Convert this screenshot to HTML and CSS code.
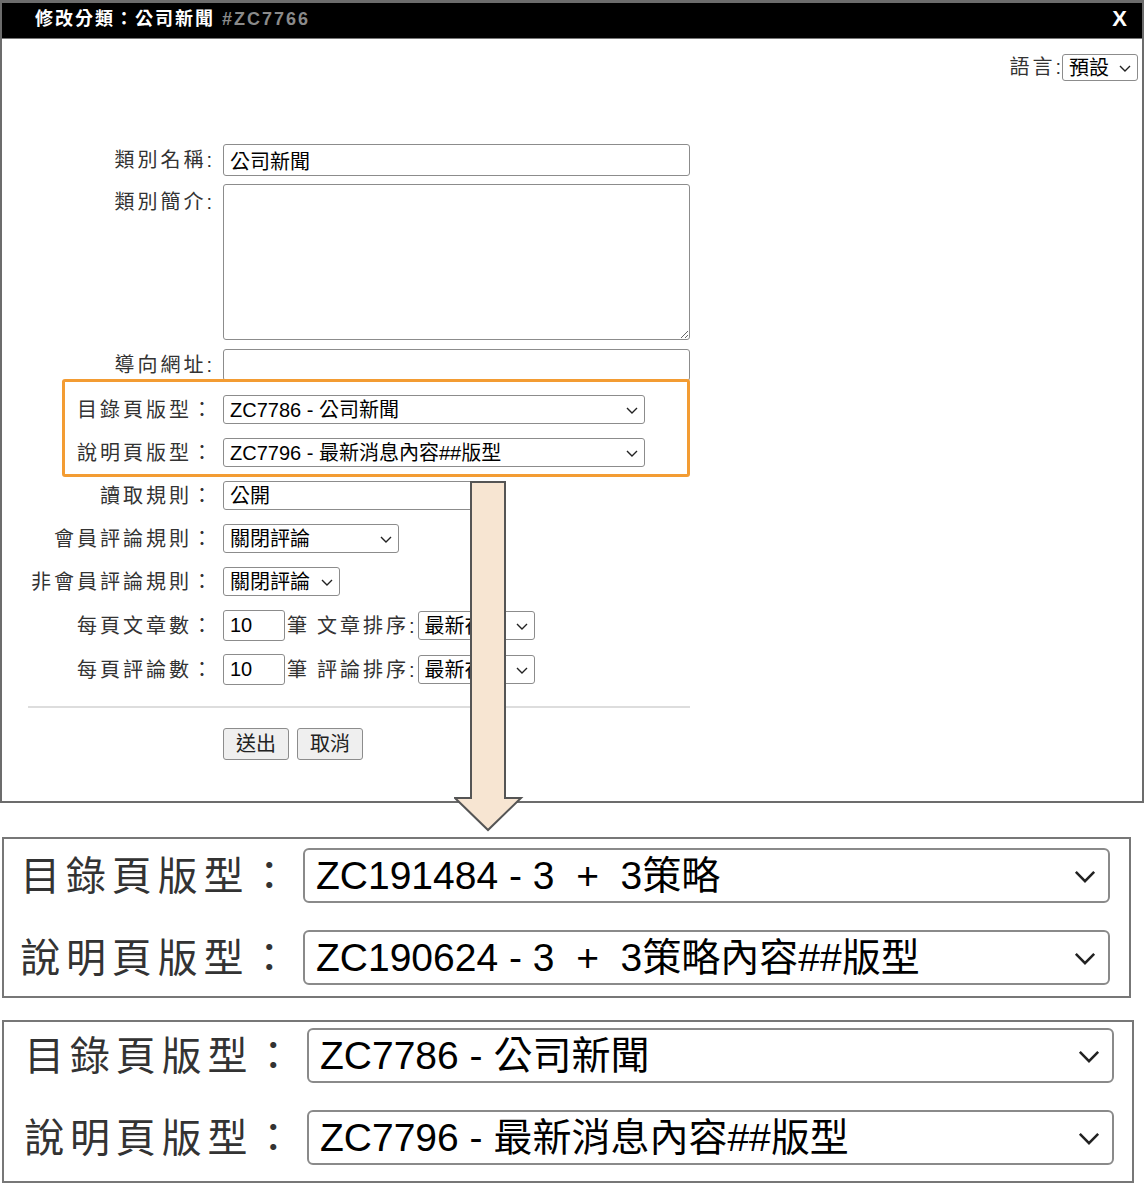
FILE: index.html
```html
<!DOCTYPE html>
<html lang="zh-Hant">
<head>
    <meta charset="UTF-8">
    <meta name="viewport" content="width=device-width, initial-scale=1.0">
    <title>修改分類</title>
    <link rel="stylesheet" href="styles.css">
</head>
<body>
    <div class="dialog">
        <div class="dialog-head">
            <span class="title">修改分類：公司新聞 <span class="code">#ZC7766</span></span>
            <span class="close">X</span>
        </div>
        <div class="lang">
            <span class="lang-label">語言:</span>
            <span class="sel">
                <select class="lang-select"><option>預設</option></select>
                <svg class="chev" viewBox="0 0 12 7"><path d="M1 1l5 5 5-5"/></svg>
            </span>
        </div>

        <form class="cat-form">
            <div class="row row-text">
                <label>類別名稱:</label>
                <input class="field" type="text" value="公司新聞">
            </div>
            <div class="row row-text row-top">
                <label>類別簡介:</label>
                <textarea class="field area"></textarea>
            </div>
            <div class="row">
                <label>導向網址:</label>
                <input class="field" type="text" value="">
            </div>
            <div class="row">
                <label>目錄頁版型：</label>
                <span class="sel">
                    <select class="tpl"><option>ZC7786 - 公司新聞</option></select>
                    <svg class="chev" viewBox="0 0 12 7"><path d="M1 1l5 5 5-5"/></svg>
                </span>
            </div>
            <div class="row">
                <label>說明頁版型：</label>
                <span class="sel">
                    <select class="tpl"><option>ZC7796 - 最新消息內容##版型</option></select>
                    <svg class="chev" viewBox="0 0 12 7"><path d="M1 1l5 5 5-5"/></svg>
                </span>
            </div>
            <div class="row">
                <label>讀取規則：</label>
                <span class="sel">
                    <select class="read"><option>公開</option></select>
                    <svg class="chev" viewBox="0 0 12 7"><path d="M1 1l5 5 5-5"/></svg>
                </span>
            </div>
            <div class="row">
                <label>會員評論規則：</label>
                <span class="sel">
                    <select class="member"><option>關閉評論</option></select>
                    <svg class="chev" viewBox="0 0 12 7"><path d="M1 1l5 5 5-5"/></svg>
                </span>
            </div>
            <div class="row">
                <label>非會員評論規則：</label>
                <span class="sel">
                    <select class="guest"><option>關閉評論</option></select>
                    <svg class="chev" viewBox="0 0 12 7"><path d="M1 1l5 5 5-5"/></svg>
                </span>
            </div>
            <div class="row row-num">
                <label>每頁文章數：</label>
                <input class="num" type="text" value="10">
                <span class="unit">筆</span>
                <span class="sort-label">文章排序:</span>
                <span class="sel">
                    <select class="sort"><option>最新在前</option></select>
                    <svg class="chev" viewBox="0 0 12 7"><path d="M1 1l5 5 5-5"/></svg>
                </span>
            </div>
            <div class="row row-num">
                <label>每頁評論數：</label>
                <input class="num" type="text" value="10">
                <span class="unit">筆</span>
                <span class="sort-label">評論排序:</span>
                <span class="sel">
                    <select class="sort"><option>最新在前</option></select>
                    <svg class="chev" viewBox="0 0 12 7"><path d="M1 1l5 5 5-5"/></svg>
                </span>
            </div>

            <hr class="sep">

            <div class="buttons">
                <button type="button" class="btn">送出</button>
                <button type="button" class="btn">取消</button>
            </div>

            <!-- highlight around the two template selects -->
            <div class="highlight"></div>
        </form>
    </div>

    <svg class="arrow" width="70" height="354" viewBox="0 0 70 354">
        <path d="M17 2 H51 V318 H67 L34 350 L1 318 H17 Z"/>
    </svg>

    <div class="zoom zoom-new">
        <div class="zrow">
            <label>目錄頁版型：</label>
            <span class="sel">
                <select class="big"><option>ZC191484 - 3&nbsp;&nbsp;+&nbsp;&nbsp;3策略</option></select>
                <svg class="chev big-chev" viewBox="0 0 12 7"><path d="M1 1l5 5 5-5"/></svg>
            </span>
        </div>
        <div class="zrow">
            <label>說明頁版型：</label>
            <span class="sel">
                <select class="big"><option>ZC190624 - 3&nbsp;&nbsp;+&nbsp;&nbsp;3策略內容##版型</option></select>
                <svg class="chev big-chev" viewBox="0 0 12 7"><path d="M1 1l5 5 5-5"/></svg>
            </span>
        </div>
    </div>

    <div class="zoom zoom-old">
        <div class="zrow">
            <label>目錄頁版型：</label>
            <span class="sel">
                <select class="big"><option>ZC7786 - 公司新聞</option></select>
                <svg class="chev big-chev" viewBox="0 0 12 7"><path d="M1 1l5 5 5-5"/></svg>
            </span>
        </div>
        <div class="zrow">
            <label>說明頁版型：</label>
            <span class="sel">
                <select class="big"><option>ZC7796 - 最新消息內容##版型</option></select>
                <svg class="chev big-chev" viewBox="0 0 12 7"><path d="M1 1l5 5 5-5"/></svg>
            </span>
        </div>
    </div>
</body>
</html>
```

FILE: styles.css
```css
body {
    margin: 0;
    position: relative;
    font-family: "Liberation Sans", "Noto Sans CJK TC", sans-serif;
    color: #333;
    background: #fff;
}
.dialog {
    box-sizing: border-box;
    height: 803px;
    border: 2px solid #6c6c6c;
    border-top-width: 3px;
}
.dialog-head {
    box-sizing: border-box;
    height: 36px;
    background: #000;
    border-bottom: 1px solid #777;
    display: flex;
    align-items: center;
    justify-content: space-between;
    padding: 0 15px 3px 33px;
    line-height: 1;
}
.title {
    color: #fff;
    font-weight: bold;
    font-size: 18px;
    letter-spacing: 2px;
}
.code {
    color: #8a8a8a;
}
.close {
    color: #fff;
    font-weight: bold;
    font-size: 22px;
}
.lang {
    display: flex;
    justify-content: flex-end;
    align-items: center;
    height: 27px;
    margin-top: 15px;
    padding-right: 4px;
    font-size: 20px;
    line-height: 27px;
}
.lang-label {
    letter-spacing: 3px;
    margin-right: -2px;
}

/* select with drawn chevron */
.sel {
    position: relative;
    display: inline-flex;
}
.sel select {
    appearance: none;
    -webkit-appearance: none;
    box-sizing: border-box;
    height: 29px;
    margin: 0;
    padding: 0 24px 0 6px;
    font: inherit;
    font-size: 20px;
    color: #000;
    background: #fff;
    border: 1px solid #8c8c8c;
    border-radius: 3px;
}
.chev {
    position: absolute;
    right: 7px;
    top: 50%;
    width: 12px;
    height: 7px;
    margin-top: -3px;
    fill: none;
    stroke: #222;
    stroke-width: 1.4;
}
.lang-select {
    width: 76px;
    height: 27px !important;
}

.cat-form {
    position: relative;
    width: 688px;
    margin-top: 63px;
}
.row {
    display: flex;
    align-items: center;
    margin-bottom: 14px;
    font-size: 20px;
}
.row-text {
    margin-bottom: 8px;
}
.row-top {
    align-items: flex-start;
    margin-bottom: 9px;
}
.row label {
    flex: none;
    width: 213px;
    margin-right: 8px;
    text-align: right;
    letter-spacing: 3px;
    line-height: 24px;
}
.row-top label {
    line-height: 36px;
}
.field {
    box-sizing: border-box;
    width: 467px;
    height: 32px;
    margin: 0;
    padding: 0 6px;
    font: inherit;
    font-size: 20px;
    color: #000;
    border: 1px solid #8c8c8c;
    border-radius: 3px;
}
.area {
    height: 156px;
    resize: both;
}
.tpl {
    width: 422px;
}
.read {
    width: 283px;
}
.member {
    width: 176px;
}
.guest {
    width: 117px;
}
.row-num {
    margin-bottom: 13px;
}
.num {
    box-sizing: border-box;
    width: 62px;
    height: 31px;
    margin: 0;
    padding: 0 6px;
    font: inherit;
    font-size: 20px;
    color: #000;
    border: 1px solid #8c8c8c;
    border-radius: 3px;
}
.unit {
    margin-left: 2px;
    line-height: 24px;
}
.sort-label {
    margin-left: 10px;
    letter-spacing: 3px;
    line-height: 24px;
}
.sort {
    width: 117px;
}
.sep {
    border: none;
    border-top: 2px solid #ddd;
    width: 662px;
    margin: 21px 0 20px 26px;
}
.buttons {
    display: flex;
    gap: 8px;
    padding-left: 221px;
}
.btn {
    height: 32px;
    padding: 0 12px;
    font: inherit;
    font-size: 20px;
    line-height: 1;
    color: #222;
    background: #efefef;
    border: 1px solid #8c8c8c;
    border-radius: 3px;
}
.highlight {
    position: absolute;
    left: 60px;
    top: 235px;
    box-sizing: border-box;
    width: 628px;
    height: 98px;
    border: 3px solid #f39c33;
    border-radius: 3px;
}

.arrow {
    position: absolute;
    left: 454px;
    top: 480px;
}
.arrow path {
    fill: #f7e5d2;
    stroke: #555;
    stroke-width: 2;
}

.zoom {
    box-sizing: border-box;
    margin-left: 2px;
    border: 2px solid #777;
}
.zoom-new {
    width: 1129px;
    margin-top: 34px;
    padding: 9px 0 11px;
}
.zoom-old {
    width: 1132px;
    margin-top: 22px;
    padding: 6px 0 16px;
}
.zrow {
    display: flex;
    align-items: center;
    margin-bottom: 27px;
}
.zrow:last-child {
    margin-bottom: 0;
}
.zrow label {
    flex: none;
    width: 291px;
    margin-right: 8px;
    text-align: right;
    font-size: 40px;
    letter-spacing: 5.8px;
    line-height: 48px;
}
.zoom-old .zrow label {
    width: 295px;
}
.sel .big {
    width: 807px;
    height: 55px;
    padding-left: 11px;
    font-size: 39px;
    border: 2px solid #8a8a8a;
    border-radius: 6px;
}
.big-chev {
    right: 14px;
    width: 22px;
    height: 13px;
    margin-top: -6px;
    stroke-width: 1.4;
}
```
